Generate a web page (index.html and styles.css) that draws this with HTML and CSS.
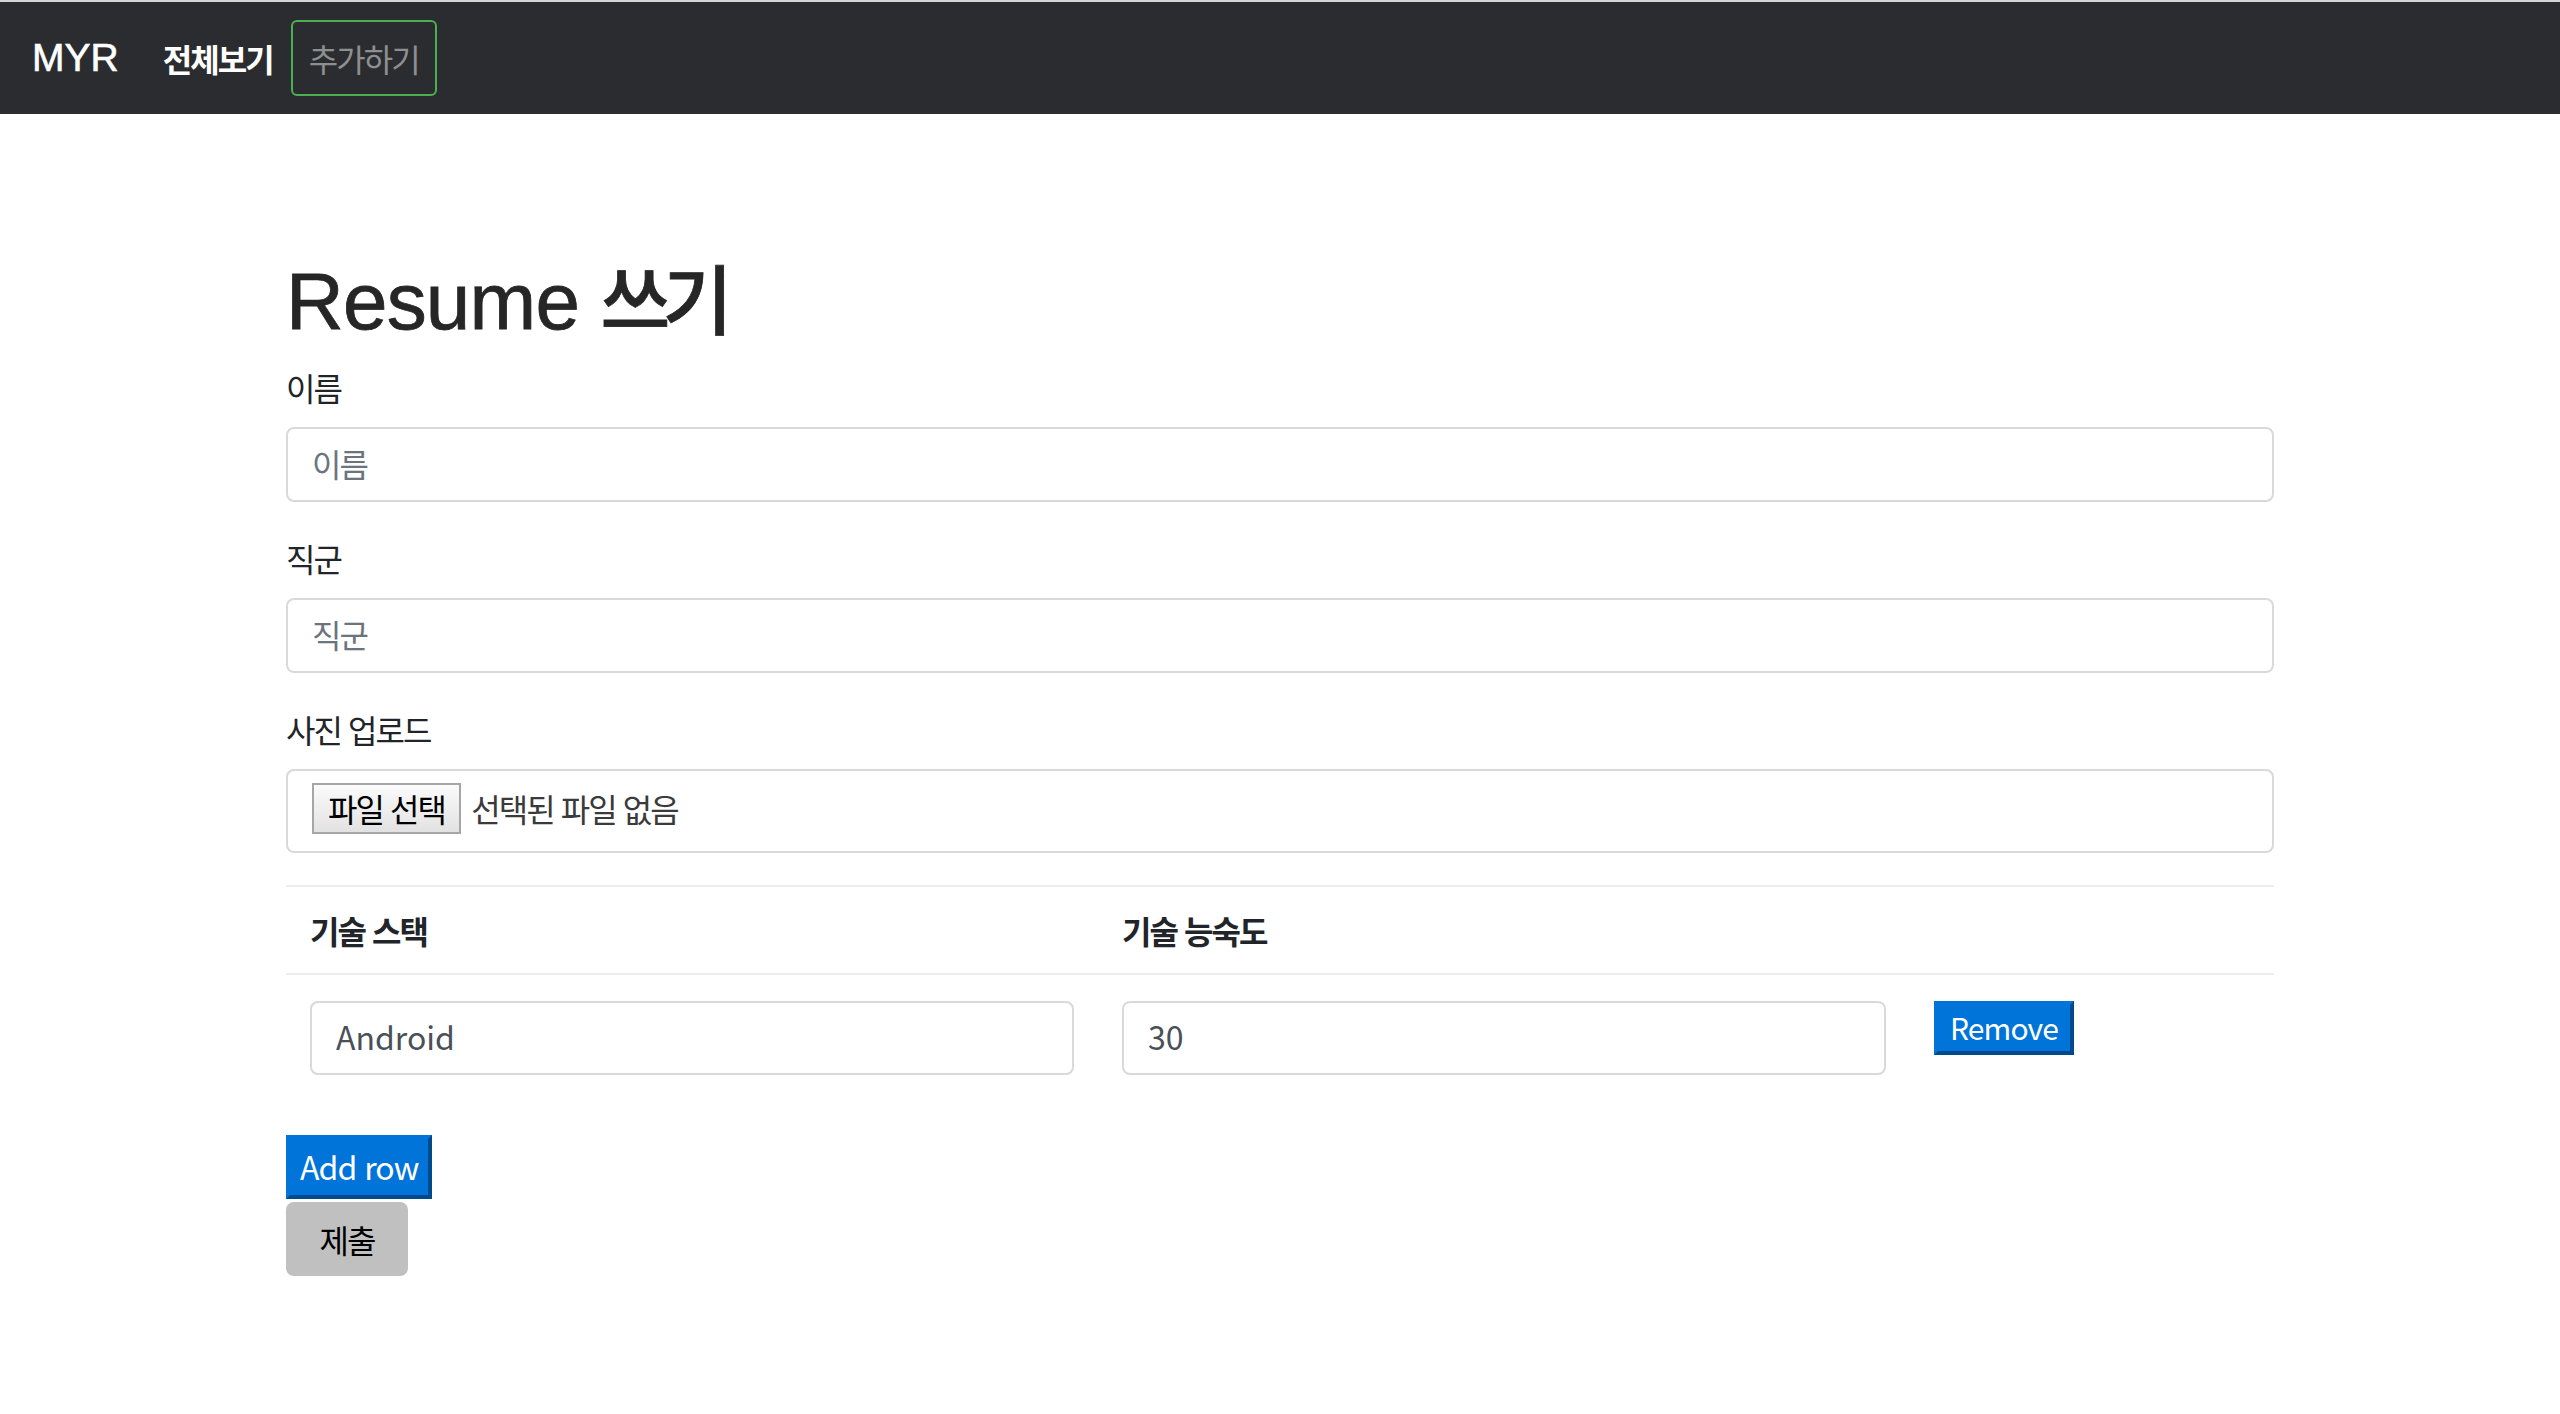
FILE: index.html
```html
<!DOCTYPE html>
<html lang="ko">
<head>
    <meta charset="UTF-8">
    <meta name="viewport" content="width=device-width, initial-scale=1.0">
    <title>MYR</title>
    <link rel="stylesheet" href="styles.css">
</head>
<body>
    <nav class="navbar">
        <a class="brand" href="#">MYR</a>
        <a class="nav-link active" href="#">전체보기</a>
        <a class="nav-link focused" href="#">추가하기</a>
    </nav>
    <main class="container">
        <h1 class="title">Resume <span class="ko">쓰기</span></h1>
        <form class="resume-form">
            <div class="form-group">
                <label class="field-label">이름</label>
                <input class="form-control" type="text" placeholder="이름">
            </div>
            <div class="form-group">
                <label class="field-label">직군</label>
                <input class="form-control" type="text" placeholder="직군">
            </div>
            <div class="form-group">
                <label class="field-label">사진 업로드</label>
                <div class="file-box">
                    <span class="file-btn">파일 선택</span>
                    <span class="file-name">선택된 파일 없음</span>
                </div>
            </div>
            <table class="skill-table">
                <thead>
                    <tr>
                        <th class="col-stack">기술 스택</th>
                        <th class="col-level">기술 능숙도</th>
                        <th class="col-action"></th>
                    </tr>
                </thead>
                <tbody>
                    <tr>
                        <td><input class="form-control cell-input" type="text" value="Android"></td>
                        <td><input class="form-control cell-input" type="text" value="30"></td>
                        <td><button type="button" class="btn-blue btn-remove">Remove</button></td>
                    </tr>
                </tbody>
            </table>
            <button type="button" class="btn-blue btn-add">Add row</button>
            <button type="submit" class="btn-submit">제출</button>
        </form>
    </main>
</body>
</html>
```

FILE: styles.css
```css
body {
    font-family: "Liberation Sans", "Noto Sans CJK KR", sans-serif;
    color: #212529;
    background-color: #ffffff;
    margin: 0;
    padding: 0;
}

.ko {
    letter-spacing: -0.1em;
    font-size: 76px;
}

.navbar {
    display: flex;
    align-items: center;
    height: 112px;
    padding: 0 32px;
    background-color: #2b2c2f;
    border-top: 2px solid #d4d4d4;
}

.navbar a {
    text-decoration: none;
}

.brand {
    font-size: 39px;
    color: #ffffff;
    margin-right: 26px;
    -webkit-text-stroke: 0.6px #ffffff;
}

.nav-link {
    font-family: "Noto Sans CJK KR", sans-serif;
    font-size: 32px;
    line-height: 40px;
    letter-spacing: -0.06em;
    padding: 16px 16px;
    border: 2px solid transparent;
}

.nav-link.active {
    color: #ffffff;
    font-weight: 700;
}

.nav-link.focused {
    color: #8e8f90;
    border-color: #4caf50;
    border-radius: 6px;
}

.container {
    width: 1988px;
    margin: 0 auto;
    padding-top: 140px;
}

.title {
    font-size: 80px;
    font-weight: 500;
    line-height: 96px;
    letter-spacing: -0.01em;
    margin: 0 0 12px;
    color: #262626;
    -webkit-text-stroke: 0.8px #262626;
}

.form-group {
    margin-bottom: 32px;
}

.field-label {
    display: block;
    font-family: "Noto Sans CJK KR", sans-serif;
    font-size: 32px;
    line-height: 48px;
    letter-spacing: -0.06em;
    margin-bottom: 16px;
}

.form-control {
    display: block;
    width: 100%;
    height: 75px;
    box-sizing: border-box;
    padding: 0 24px 4px;
    font-family: "Noto Sans CJK KR", sans-serif;
    font-size: 32px;
    color: #495057;
    border: 2px solid #d9d9d9;
    border-radius: 8px;
    outline: none;
}

.form-control::placeholder {
    color: #6c757d;
    letter-spacing: -0.06em;
}

.file-box {
    display: flex;
    align-items: center;
    height: 84px;
    box-sizing: border-box;
    padding: 0 24px;
    border: 2px solid #d9d9d9;
    border-radius: 8px;
    font-family: "Noto Sans CJK KR", sans-serif;
    font-size: 32px;
    letter-spacing: -0.06em;
}

.file-btn {
    display: inline-flex;
    align-items: center;
    height: 51px;
    box-sizing: border-box;
    padding: 0 14px;
    margin-top: -6px;
    color: #000000;
    background: linear-gradient(#fbfbfb, #e2e2e2);
    border: 2px solid #a6a6a6;
}

.file-name {
    margin-left: 10px;
    margin-top: -6px;
    color: #3a3a3a;
}

.skill-table {
    width: 100%;
    table-layout: fixed;
    border-collapse: collapse;
    margin-top: 13px;
    margin-bottom: 36px;
}

.skill-table th {
    text-align: left;
    font-family: "Noto Sans CJK KR", sans-serif;
    font-size: 32px;
    font-weight: 700;
    line-height: 40px;
    letter-spacing: -0.06em;
    padding: 23px 24px;
    border-top: 2px solid #ececec;
    border-bottom: 2px solid #ececec;
}

.col-stack,
.col-level {
    width: 764px;
}

.skill-table td {
    vertical-align: top;
    padding: 26px 24px 24px;
}

.cell-input {
    height: 74px;
}

.btn-blue {
    display: block;
    font-family: "Noto Sans CJK KR", sans-serif;
    color: #ffffff;
    background-color: #0074d9;
    border: 4px solid;
    border-color: #0074d9 #00498a #00498a #0074d9;
    border-radius: 0;
    cursor: pointer;
}

.btn-remove {
    height: 54px;
    font-size: 30px;
    letter-spacing: -0.03em;
    padding: 0 12px 4px;
}

.btn-add {
    height: 64px;
    font-size: 32px;
    letter-spacing: -0.03em;
    padding: 0 10px 2px;
}

.btn-submit {
    display: block;
    width: 122px;
    height: 74px;
    margin-top: 3px;
    font-family: "Noto Sans CJK KR", sans-serif;
    font-size: 32px;
    letter-spacing: -0.06em;
    color: #000000;
    background-color: #c0c0c0;
    border: none;
    border-radius: 8px;
}
```
